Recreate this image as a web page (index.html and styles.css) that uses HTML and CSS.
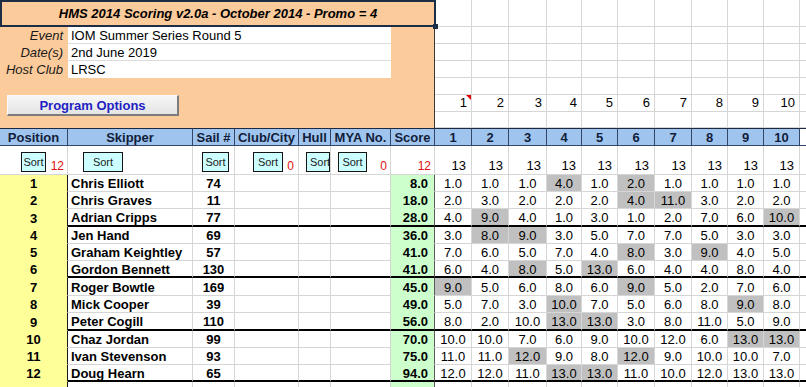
FILE: index.html
```html
<!DOCTYPE html>
<html>
<head>
<meta charset="utf-8">
<title>HMS 2014 Scoring</title>
<link rel="stylesheet" href="styles.css">
</head>
<body>
<div class="sheet">
  <div class="panel">
    <div class="title">HMS 2014 Scoring v2.0a - October 2014 - Promo = 4<i class="handle"></i></div>
    <div class="info">
      <span class="lab">Event</span><span class="val">IOM Summer Series Round 5</span>
      <span class="lab">Date(s)</span><span class="val">2nd June 2019</span>
      <span class="lab">Host Club</span><span class="val last">LRSC</span>
    </div>
    <button class="opts" type="button">Program Options</button>
  </div>

  <span></span><span></span><span></span><span></span><span></span><span></span><span></span><span></span><span></span><span></span><span></span>
  <span></span><span></span><span></span><span></span><span></span><span></span><span></span><span></span><span></span><span></span><span></span>
  <span></span><span></span><span></span><span></span><span></span><span></span><span></span><span></span><span></span><span></span><span></span>
  <span></span><span></span><span></span><span></span><span></span><span></span><span></span><span></span><span></span><span></span><span></span>
  <span></span><span></span><span></span><span></span><span></span><span></span><span></span><span></span><span></span><span></span><span></span>
  <span class="num cm">1</span><span class="num">2</span><span class="num">3</span><span class="num">4</span><span class="num">5</span><span class="num">6</span><span class="num">7</span><span class="num">8</span><span class="num">9</span><span class="num">10</span><span></span>
  <span></span><span></span><span></span><span></span><span></span><span></span><span></span><span></span><span></span><span></span><span></span>

  <div class="row hd"><span>Position</span><span>Skipper</span><span>Sail #</span><span>Club/City</span><span>Hull</span><span>MYA No.</span><span>Score</span><span>1</span><span>2</span><span>3</span><span>4</span><span>5</span><span>6</span><span>7</span><span>8</span><span>9</span><span>10</span><span></span></div>

  <div class="row srt">
    <span class="sp"><button class="sb w25" type="button">Sort</button><em class="cnt">12</em></span>
    <span class="ss"><button class="sb w40" type="button">Sort</button></span>
    <span class="sl2"><button class="sb w27" type="button">Sort</button></span>
    <span class="scl"><button class="sb w30" type="button">Sort</button><em class="cnt">0</em></span>
    <span class="sh"><button class="sb w24 clip" type="button">Sort</button></span>
    <span class="sm"><button class="sb w29" type="button">Sort</button><em class="cnt">0</em></span>
    <span class="sk"><em class="cnt">12</em></span>
    <span class="t">13</span><span class="t">13</span><span class="t">13</span><span class="t">13</span><span class="t">13</span><span class="t">13</span><span class="t">13</span><span class="t">13</span><span class="t">13</span><span class="t">13</span><span></span>
  </div>

  <div class="row"><span class="p">1</span><span class="n">Chris Elliott</span><span class="sl">74</span><span></span><span></span><span></span><span class="g">8.0</span><span>1.0</span><span>1.0</span><span>1.0</span><span class="d">4.0</span><span>1.0</span><span class="d">2.0</span><span>1.0</span><span>1.0</span><span>1.0</span><span>1.0</span><span></span></div>
  <div class="row"><span class="p">2</span><span class="n">Chris Graves</span><span class="sl">11</span><span></span><span></span><span></span><span class="g">18.0</span><span>2.0</span><span>3.0</span><span>2.0</span><span>2.0</span><span>2.0</span><span class="d">4.0</span><span class="d">11.0</span><span>3.0</span><span>2.0</span><span>2.0</span><span></span></div>
  <div class="row end"><span class="p">3</span><span class="n">Adrian Cripps</span><span class="sl">77</span><span></span><span></span><span></span><span class="g">28.0</span><span>4.0</span><span class="d">9.0</span><span>4.0</span><span>1.0</span><span>3.0</span><span>1.0</span><span>2.0</span><span>7.0</span><span>6.0</span><span class="d">10.0</span><span></span></div>
  <div class="row"><span class="p">4</span><span class="n">Jen Hand</span><span class="sl">69</span><span></span><span></span><span></span><span class="g">36.0</span><span>3.0</span><span class="d">8.0</span><span class="d">9.0</span><span>3.0</span><span>5.0</span><span>7.0</span><span>7.0</span><span>5.0</span><span>3.0</span><span>3.0</span><span></span></div>
  <div class="row"><span class="p">5</span><span class="n">Graham Keightley</span><span class="sl">57</span><span></span><span></span><span></span><span class="g">41.0</span><span>7.0</span><span>6.0</span><span>5.0</span><span>7.0</span><span>4.0</span><span class="d">8.0</span><span>3.0</span><span class="d">9.0</span><span>4.0</span><span>5.0</span><span></span></div>
  <div class="row end"><span class="p">6</span><span class="n">Gordon Bennett</span><span class="sl">130</span><span></span><span></span><span></span><span class="g">41.0</span><span>6.0</span><span>4.0</span><span class="d">8.0</span><span>5.0</span><span class="d">13.0</span><span>6.0</span><span>4.0</span><span>4.0</span><span>8.0</span><span>4.0</span><span></span></div>
  <div class="row"><span class="p">7</span><span class="n">Roger Bowtle</span><span class="sl">169</span><span></span><span></span><span></span><span class="g">45.0</span><span class="d">9.0</span><span>5.0</span><span>6.0</span><span>8.0</span><span>6.0</span><span class="d">9.0</span><span>5.0</span><span>2.0</span><span>7.0</span><span>6.0</span><span></span></div>
  <div class="row"><span class="p">8</span><span class="n">Mick Cooper</span><span class="sl">39</span><span></span><span></span><span></span><span class="g">49.0</span><span>5.0</span><span>7.0</span><span>3.0</span><span class="d">10.0</span><span>7.0</span><span>5.0</span><span>6.0</span><span>8.0</span><span class="d">9.0</span><span>8.0</span><span></span></div>
  <div class="row end"><span class="p">9</span><span class="n">Peter Cogill</span><span class="sl">110</span><span></span><span></span><span></span><span class="g">56.0</span><span>8.0</span><span>2.0</span><span>10.0</span><span class="d">13.0</span><span class="d">13.0</span><span>3.0</span><span>8.0</span><span>11.0</span><span>5.0</span><span>9.0</span><span></span></div>
  <div class="row"><span class="p">10</span><span class="n">Chaz Jordan</span><span class="sl">99</span><span></span><span></span><span></span><span class="g">70.0</span><span>10.0</span><span>10.0</span><span>7.0</span><span>6.0</span><span>9.0</span><span>10.0</span><span>12.0</span><span>6.0</span><span class="d">13.0</span><span class="d">13.0</span><span></span></div>
  <div class="row"><span class="p">11</span><span class="n">Ivan Stevenson</span><span class="sl">93</span><span></span><span></span><span></span><span class="g">75.0</span><span>11.0</span><span>11.0</span><span class="d">12.0</span><span>9.0</span><span>8.0</span><span class="d">12.0</span><span>9.0</span><span>10.0</span><span>10.0</span><span>7.0</span><span></span></div>
  <div class="row end"><span class="p">12</span><span class="n">Doug Hearn</span><span class="sl">65</span><span></span><span></span><span></span><span class="g">94.0</span><span>12.0</span><span>12.0</span><span>11.0</span><span class="d">13.0</span><span class="d">13.0</span><span>11.0</span><span>10.0</span><span>12.0</span><span>13.0</span><span>13.0</span><span></span></div>
  <div class="row"><span class="p"></span><span class="n"></span><span class="sl"></span><span></span><span></span><span></span><span class="g"></span><span></span><span></span><span></span><span></span><span></span><span></span><span></span><span></span><span></span><span></span><span></span></div>
</div>
</body>
</html>
```

FILE: styles.css
```css
* { box-sizing: border-box; }

html, body {
  margin: 0;
  padding: 0;
  background: #fff;
  overflow: hidden;
}

.sheet {
  display: grid;
  grid-template-columns: 68px 125px 42px 64px 32px 60px 44px 37px 37px 38px 35px 36px 37px 37px 36px 36px 36px 64px;
  grid-template-rows: 27px 17px 17px 17px 17px 17px 16px 18px 29px 17px 17px 18px 17px 17px 17px 18px 17px 18px 17px 17px 17px 17px;
  width: 864px;
  font: 13px "Liberation Sans", Arial, sans-serif;
  color: #000;
}

.row { display: contents; }

.sheet > span,
.row > span {
  display: flex;
  align-items: center;
  justify-content: center;
  border-right: 1px solid #d6d6d6;
  border-bottom: 1px solid #d6d6d6;
  overflow: hidden;
  white-space: nowrap;
  min-width: 0;
  padding-top: 1px;
}

/* ---------- top panel ---------- */
.panel {
  grid-column: 1 / 8;
  grid-row: 1 / 8;
  background: #fccb9b;
  border-right: 1px solid #3a3a3a;
  display: flex;
  flex-direction: column;
  align-items: flex-start;
}

.title {
  position: relative;
  width: 436px;
  height: 27px;
  border: 2px solid #1c2d46;
  display: flex;
  align-items: center;
  justify-content: center;
  font-weight: bold;
  font-style: italic;
}

.handle {
  position: absolute;
  right: -4px;
  bottom: -4px;
  width: 5px;
  height: 5px;
  background: #1c2d46;
}

.info {
  display: grid;
  grid-template-columns: 68px 323px;
  grid-auto-rows: 17px;
}

.info .lab {
  font-style: italic;
  text-align: right;
  padding-right: 5px;
  line-height: 17px;
  color: #1a1a1a;
}

.info .val {
  background: #fff;
  border-bottom: 1px solid #dcdcdc;
  padding-left: 3px;
  line-height: 17px;
}

.info .val.last { border-bottom: 0; }

.opts {
  margin: 17px 0 0 7px;
  width: 172px;
  height: 21px;
  padding: 0;
  background: linear-gradient(#f6f6f6, #e4e4e4);
  border-top: 1px solid #fafafa;
  border-left: 1px solid #fafafa;
  border-right: 2px solid #7c7c7c;
  border-bottom: 2px solid #7c7c7c;
  font: bold 13px "Liberation Sans", Arial, sans-serif;
  color: #1f1fc4;
}

/* top-right numbers */
.sheet > span.num {
  justify-content: flex-end;
  align-items: flex-end;
  padding-right: 4px;
  padding-bottom: 1px;
}

.cm { position: relative; }
.cm::after {
  content: "";
  position: absolute;
  top: 0;
  right: 0;
  border-top: 5px solid #e00000;
  border-left: 5px solid transparent;
}

/* ---------- header row ---------- */
.hd > span {
  background: #9fc5ef;
  border-top: 1px solid #1d2940;
  border-right: 1px solid #33466a;
  border-bottom: 1px solid #33466a;
  font-weight: bold;
  color: #121d3a;
  padding-top: 0;
}

.hd > span:last-child {
  background: #fff;
  border-right-color: #d6d6d6;
}

/* ---------- sort row ---------- */
.srt > span {
  align-items: flex-start;
  justify-content: flex-start;
  padding-top: 6px;
}

.sb {
  height: 20px;
  padding: 0;
  background: #ccffff;
  border: 1px solid #141414;
  font: 11px "Liberation Sans", Arial, sans-serif;
  color: #222;
  overflow: hidden;
  white-space: nowrap;
  flex: none;
}

.w24 { width: 24px; }
.w25 { width: 25px; }
.w27 { width: 27px; }
.w29 { width: 29px; }
.w30 { width: 30px; }
.w40 { width: 40px; }

.clip {
  text-align: left;
  padding-left: 3px;
}

.cnt {
  margin-left: auto;
  align-self: flex-end;
  font-style: normal;
  font-size: 12px;
  line-height: 14px;
  color: #e01010;
  padding-bottom: 1px;
}

.sp { padding-left: 21px; padding-right: 3px; }
.ss { padding-left: 15px; }
.sl2 { padding-left: 9px; }
.scl { padding-left: 18px; padding-right: 4px; }
.sh { padding-left: 7px; }
.sm { padding-left: 7px; padding-right: 3px; }
.sk { padding-right: 3px; }

.srt > span.t {
  justify-content: flex-end;
  align-items: flex-end;
  padding-right: 5px;
  padding-bottom: 1px;
}

/* ---------- data rows ---------- */
.row > span.p {
  background: #ffff99;
  font-weight: bold;
  border-right: 1px solid #1a1a1a;
  border-bottom-color: #ffff99;
}

.row > span.n {
  font-weight: bold;
  justify-content: flex-start;
  padding-left: 3px;
}

.row > span.sl { font-weight: bold; }

.row > span.g {
  background: #ccffcc;
  font-weight: bold;
  justify-content: flex-end;
  padding-right: 6px;
  border-right: 1px solid #5a5a5a;
  border-bottom-color: #ccffcc;
}

.row > span.d { background: #c0c0c0; }

.end > span:not(.p) { border-bottom: 2px solid #000; }
```
